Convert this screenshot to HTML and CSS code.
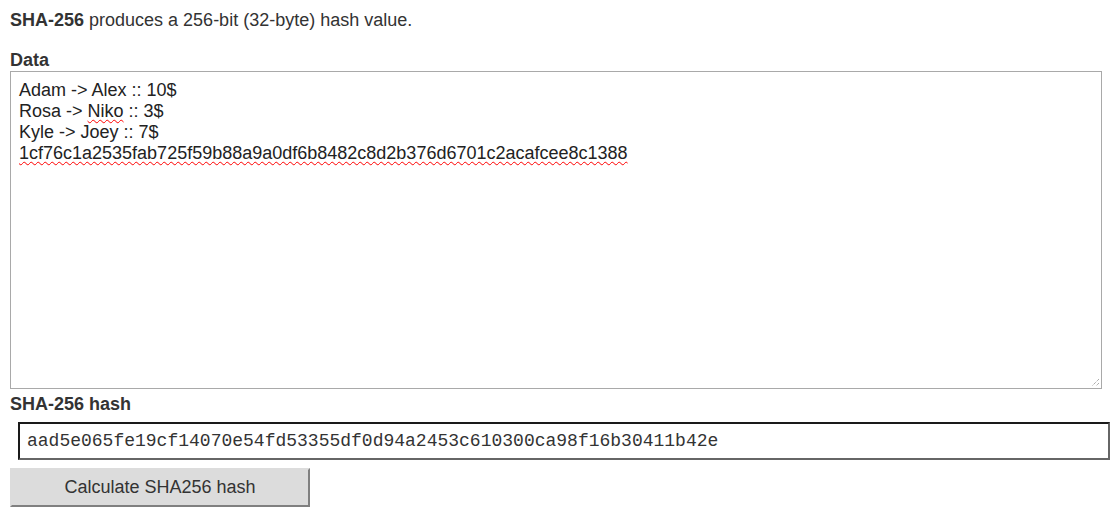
FILE: index.html
```html
<!DOCTYPE html>
<html>
<head>
<meta charset="utf-8">
<link rel="stylesheet" href="styles.css">
</head>
<body>
<p class="intro"><b>SHA-256</b> produces a 256-bit (32-byte) hash value.</p>
<div class="label label-data">Data</div>
<div class="data-box">
  <div class="line">Adam -&gt; Alex :: 10$</div>
  <div class="line">Rosa -&gt; <span class="misspelled">Niko</span> :: 3$</div>
  <div class="line">Kyle -&gt; Joey :: 7$</div>
  <div class="line"><span class="misspelled">1cf76c1a2535fab725f59b88a9a0df6b8482c8d2b376d6701c2acafcee8c1388</span></div>
  <svg class="grip" width="9" height="9" viewBox="0 0 9 9"><path d="M8 1 L1 8 M8 5 L5 8" stroke="#888" stroke-width="1" stroke-dasharray="1 1" fill="none"/></svg>
</div>
<div class="label label-hash">SHA-256 hash</div>
<div class="hash-box">aad5e065fe19cf14070e54fd53355df0d94a2453c610300ca98f16b30411b42e</div>
<button class="calc">Calculate SHA256 hash</button>
</body>
</html>
```
FILE: styles.css
```css
html, body {
  margin: 0;
  background: #fff;
}
body {
  padding: 10px;
  font-family: "Liberation Sans", Arial, sans-serif;
  font-size: 18px;
  line-height: 21px;
  color: #333;
  display: flex;
  flex-direction: column;
  align-items: flex-start;
}
.intro {
  margin: 0 0 19px 0;
}
.label {
  font-weight: bold;
}
.data-box {
  position: relative;
  box-sizing: border-box;
  width: 1092px;
  height: 318px;
  border: 1px solid #a9a9a9;
  padding: 8px 8px;
  color: #222;
}
.misspelled {
  text-decoration: underline wavy #ff0000;
  text-decoration-thickness: 1px;
  text-underline-offset: 2px;
}
.grip {
  position: absolute;
  right: 1px;
  bottom: 1px;
}
.label-hash {
  margin-top: 5px;
}
.hash-box {
  box-sizing: border-box;
  margin: 7px 0 0 8px;
  width: 1092px;
  height: 38px;
  border: 2px solid;
  border-color: #1a1a1a #666 #666 #1a1a1a;
  padding: 0 7px;
  font-family: "Liberation Mono", "Courier New", monospace;
  font-size: 18px;
  line-height: 34px;
  color: #333;
}
.calc {
  margin-top: 8px;
  box-sizing: border-box;
  width: 300px;
  height: 39px;
  background: #dcdcdc;
  border: 2px solid;
  border-color: #dcdcdc #808080 #808080 #dcdcdc;
  font-family: "Liberation Sans", Arial, sans-serif;
  font-size: 18px;
  color: #333;
  padding: 0;
}
```
